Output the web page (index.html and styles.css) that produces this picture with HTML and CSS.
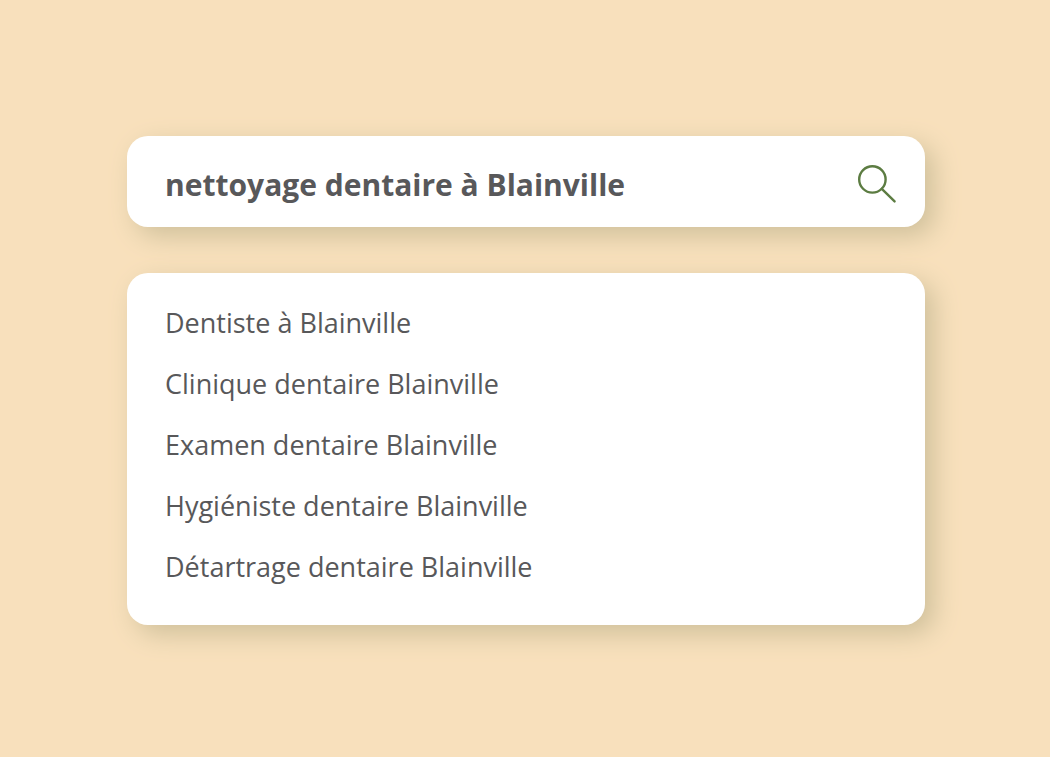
FILE: index.html
```
<!DOCTYPE html>
<html lang="fr">
<head>
    <meta charset="utf-8">
    <meta name="viewport" content="width=device-width, initial-scale=1">
    <title>Recherche</title>
    <link rel="stylesheet" href="styles.css">
</head>
<body>
    <main class="search">
        <form class="card search-bar" role="search">
            <input type="text" class="search-input" aria-label="Recherche" value="nettoyage dentaire à Blainville">
            <button type="submit" class="search-btn" aria-label="Rechercher">
                <svg viewBox="0 0 40 40" fill="none" stroke="currentColor" stroke-width="2.4">
                    <circle cx="15.4" cy="15.4" r="13.2"/>
                    <path d="M24.8 24.8L37.6 37.4" stroke-linecap="round"/>
                </svg>
            </button>
        </form>

        <ul class="card suggestions">
            <li><a href="#">Dentiste à Blainville</a></li>
            <li><a href="#">Clinique dentaire Blainville</a></li>
            <li><a href="#">Examen dentaire Blainville</a></li>
            <li><a href="#">Hygiéniste dentaire Blainville</a></li>
            <li><a href="#">Détartrage dentaire Blainville</a></li>
        </ul>
    </main>
</body>
</html>
```
FILE: styles.css
```
* {
    box-sizing: border-box;
}

body {
    margin: 0;
    min-height: 100vh;
    padding: 136px 125px 132px 127px;
    font-family: 'Open Sans', sans-serif;
    color: #58585a;
    background: #f8e0bc;
}

.search {
    display: flex;
    flex-direction: column;
    gap: 46px;
}

.card {
    margin: 0;
    background: #fff;
    border-radius: 21px;
    box-shadow: 9px 9px 26px #cfc09b;
}

.search-bar {
    display: flex;
    align-items: center;
    padding: 26px 28px 21px 38px;
}

.search-input {
    flex: 1;
    min-width: 0;
    height: 44px;
    padding: 0;
    border: none;
    outline: none;
    font: bold 30px 'Open Sans', sans-serif;
    color: inherit;
    background: none;
}

.search-btn {
    width: 40px;
    height: 40px;
    padding: 0;
    border: none;
    color: #5c7c42;
    background: none;
    cursor: pointer;
}

.search-btn svg {
    display: block;
}

.suggestions {
    display: flex;
    flex-direction: column;
    gap: 25px;
    padding: 32px 38px 40px;
    list-style: none;
}

.suggestions a {
    display: block;
    font-size: 27px;
    line-height: 36px;
    color: inherit;
    text-decoration: none;
}
```
